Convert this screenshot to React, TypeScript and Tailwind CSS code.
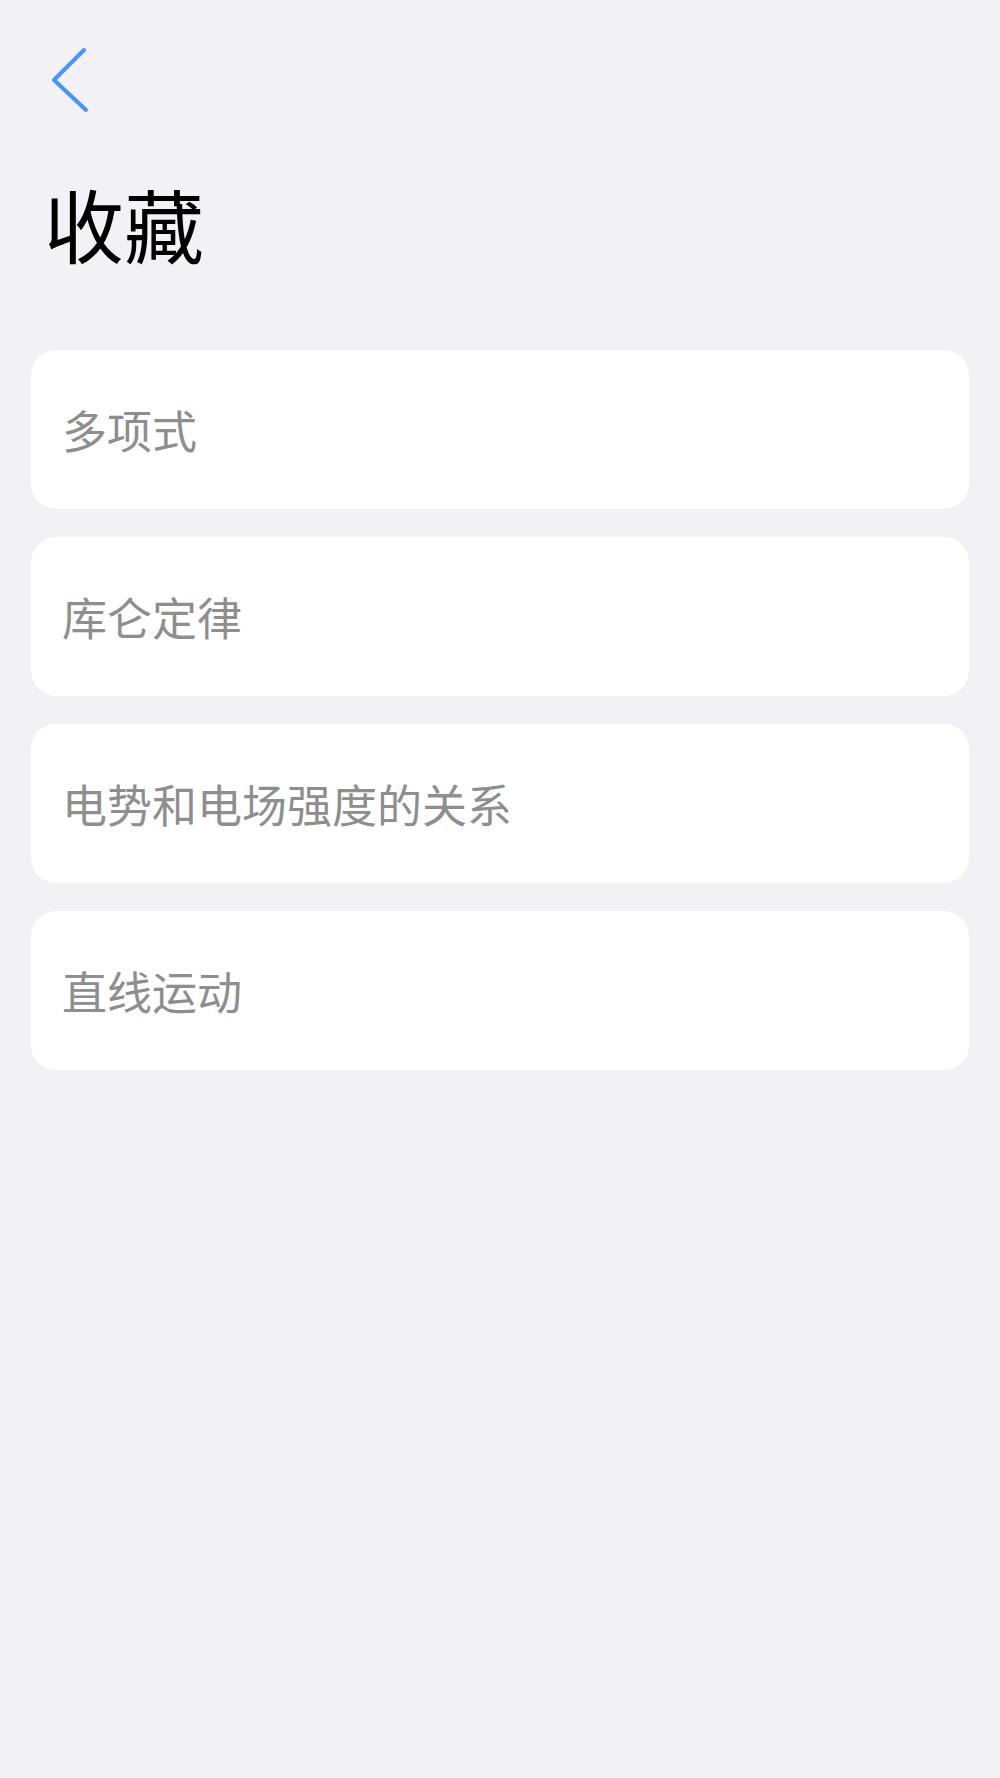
import { ReactNode } from 'react';

const items = ['多项式', '库仑定律', '电势和电场强度的关系', '直线运动'];

function BackButton() {
    return (
        <button className="block w-[44px] h-[68px] ml-[50px]">
            <svg viewBox="0 0 44 68" className="w-[44px] h-[68px]" fill="none">
                <path
                    d="M34 3 L4 33 L36 63"
                    stroke="#4a94f2"
                    strokeWidth="4"
                    strokeLinecap="round"
                    strokeLinejoin="round"
                />
            </svg>
        </button>
    );
}

function Card({ children }: { children: ReactNode }) {
    return (
        <div className="bg-white rounded-[25px] h-[159px] px-[31px] flex items-center">
            <span className="text-[45px] leading-none text-[#8e8e8e]">{children}</span>
        </div>
    );
}

export default function App() {
    return (
        <div
            className="min-h-[1778px] bg-[#f1f1f6] pt-[47px]"
            style={{ fontFamily: '"Noto Sans CJK SC", "Noto Sans", sans-serif' }}
        >
            <BackButton />

            <h1 className="mt-[67px] ml-[44px] text-[80px] leading-none font-normal text-black">收藏</h1>

            <div className="mt-[88px] mx-[31px] flex flex-col gap-[28px]">
                {items.map((t) => (
                    <Card key={t}>{t}</Card>
                ))}
            </div>
        </div>
    );
}
